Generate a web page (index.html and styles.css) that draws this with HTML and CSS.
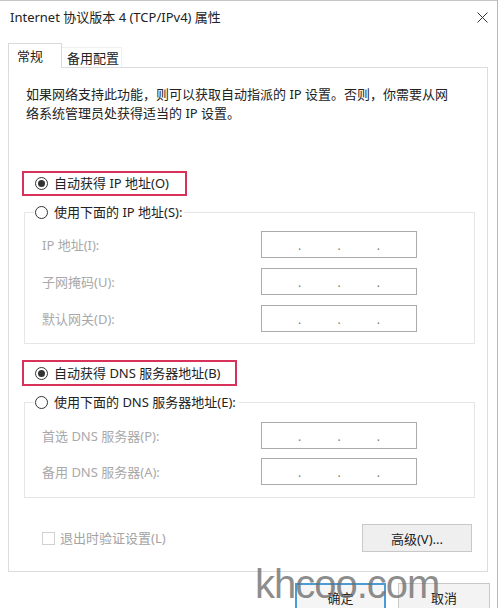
FILE: index.html
```html
<!DOCTYPE html>
<html lang="zh-CN">
<head>
<meta charset="utf-8">
<title>Internet 协议版本 4 (TCP/IPv4) 属性</title>
<link rel="stylesheet" href="styles.css">
</head>
<body>
<div class="window">
  <div class="titlebar">
    <span class="title">Internet 协议版本 4 (TCP/IPv4) 属性</span>
    <svg class="close" width="11" height="11" viewBox="0 0 11 11"><path d="M0.5 0.5 L10.5 10.5 M10.5 0.5 L0.5 10.5" stroke="#333" stroke-width="1" fill="none"/></svg>
  </div>
  <div class="tabs">
    <div class="tab active">常规</div>
    <div class="tab">备用配置</div>
  </div>
  <div class="panel">
    <p class="intro">如果网络支持此功能，则可以获取自动指派的 IP 设置。否则，你需要从网<br>络系统管理员处获得适当的 IP 设置。</p>

    <div class="highlight hl-ip">
      <span class="radio checked"></span><span class="rlabel">自动获得 IP 地址(O)</span>
    </div>

    <fieldset class="group">
      <legend class="legend"><span class="radio"></span><span class="rlabel">使用下面的 IP 地址(S):</span></legend>
      <div class="row"><span class="flabel">IP 地址(I):</span><span class="ipbox"><i>.</i><i>.</i><i>.</i></span></div>
      <div class="row"><span class="flabel">子网掩码(U):</span><span class="ipbox"><i>.</i><i>.</i><i>.</i></span></div>
      <div class="row"><span class="flabel">默认网关(D):</span><span class="ipbox"><i>.</i><i>.</i><i>.</i></span></div>
    </fieldset>

    <div class="highlight hl-dns">
      <span class="radio checked"></span><span class="rlabel">自动获得 DNS 服务器地址(B)</span>
    </div>

    <fieldset class="group group-dns">
      <legend class="legend"><span class="radio"></span><span class="rlabel">使用下面的 DNS 服务器地址(E):</span></legend>
      <div class="row"><span class="flabel">首选 DNS 服务器(P):</span><span class="ipbox"><i>.</i><i>.</i><i>.</i></span></div>
      <div class="row"><span class="flabel">备用 DNS 服务器(A):</span><span class="ipbox"><i>.</i><i>.</i><i>.</i></span></div>
    </fieldset>

    <div class="footer-row">
      <label class="check"><span class="checkbox"></span><span class="clabel">退出时验证设置(L)</span></label>
      <button class="btn adv">高级(V)...</button>
    </div>
  </div>
  <div class="actions">
    <button class="btn ok">确定</button>
    <button class="btn cancel">取消</button>
  </div>
  <div class="watermark">khcoo.com</div>
</div>
</body>
</html>
```

FILE: styles.css
```css
* { box-sizing: border-box; }
html, body { margin: 0; padding: 0; background: #fff; }
body {
  font-family: "Noto Sans", "Noto Sans CJK SC", sans-serif;
  font-size: 13px;
  color: #222;
  width: 500px;
  height: 608px;
  overflow: hidden;
}
.window {
  position: relative;
  width: 498px;
  height: 608px;
  border-top: 1px solid #c4c4c4;
  border-right: 1px solid #b8b8b8;
  background: #fff;
  overflow: hidden;
}
.titlebar {
  height: 33px;
  display: flex;
  align-items: center;
  justify-content: space-between;
  padding: 0 9px 0 10px;
}
.title { line-height: 19px; color: #222; }
.close { display: block; }

.tabs {
  display: flex;
  margin: 9px 0 0 8px;
  height: 24px;
  align-items: flex-end;
}
.tab {
  line-height: 19px;
}
.tab.active {
  width: 54px;
  height: 25px;
  padding: 3px 0 0 8px;
  border: 1px solid #dadada;
  border-bottom: none;
  background: #fff;
  position: relative;
  z-index: 1;
  margin-bottom: -1px;
}
.tab:not(.active) {
  width: 60px;
  height: 20px;
  padding: 1px 0 0 5px;
  border-top: 1px solid #efefef;
  border-right: 1px solid #efefef;
}

.panel {
  margin: 0 9px 0 8px;
  height: 505px;
  border: 1px solid #dcdcdc;
  display: flex;
  flex-direction: column;
}
.intro {
  margin: 17px 0 0 17px;
  line-height: 19px;
}

.highlight {
  margin-left: 13px;
  height: 25px;
  border: 2px solid #d8325a;
  display: flex;
  align-items: center;
  padding-left: 11px;
}
.hl-ip { margin-top: 48px; width: 165px; }
.hl-dns { margin-top: 16px; width: 215px; height: 26px; }

.radio {
  width: 13px;
  height: 13px;
  border: 1px solid #333;
  border-radius: 50%;
  display: inline-flex;
  align-items: center;
  justify-content: center;
  flex: none;
  background: #fff;
}
.radio.checked::after {
  content: "";
  width: 7px;
  height: 7px;
  border-radius: 50%;
  background: #333;
}
.rlabel { margin-left: 6px; line-height: 19px; white-space: nowrap; }

.group {
  margin: 7px 12px 0 15px;
  padding: 9px 0 11px 9px;
  border: 1px solid #e6e6e6;
  min-width: 0;
}
.group-dns { padding: 10px 0 12px 9px; }
.legend {
  padding: 0 2px 0 1px;
  display: flex;
  align-items: center;
  line-height: 19px;
  background: #fff;
}
.row {
  display: grid;
  grid-template-columns: 227px 156px;
  align-items: center;
  height: 27px;
}
.row + .row { margin-top: 10px; }
.group-dns .row + .row { margin-top: 9px; }
.flabel {
  padding-left: 8px;
  color: #a9a9a9;
  white-space: nowrap;
}
.ipbox {
  height: 27px;
  border: 1px solid #ababab;
  display: flex;
  justify-content: space-evenly;
  align-items: center;
  padding-top: 3px;
}
.ipbox i {
  font-style: normal;
  color: #7d7d7d;
  font-size: 12px;
  line-height: 12px;
}

.footer-row {
  margin: 26px 15px 0 33px;
  display: flex;
  align-items: center;
  justify-content: space-between;
}
.check { display: flex; align-items: center; }
.checkbox {
  width: 13px;
  height: 13px;
  border: 1px solid #d0d0d0;
  background: #fff;
}
.clabel { margin-left: 5px; color: #a3a3a3; line-height: 19px; }

.btn {
  font-family: inherit;
  font-size: 13px;
  color: #222;
  padding: 0;
  height: 28px;
  background: #efefef;
  border: 1px solid #c8c8c8;
}
.adv { width: 110px; }

.actions {
  margin-top: 11px;
  display: flex;
  justify-content: flex-end;
  gap: 12px;
  padding-right: 7px;
}
.ok {
  width: 91px;
  border: 2px solid #4b9bd6;
  background: #f5f5f5;
}
.cancel {
  width: 92px;
  background: #f3f3f3;
}

.watermark {
  position: absolute;
  left: 255px;
  top: 563px;
  font-family: "Liberation Sans", sans-serif;
  font-size: 40px;
  line-height: 40px;
  letter-spacing: -1px;
  color: rgba(110, 110, 110, 0.78);
  pointer-events: none;
  z-index: 5;
}
```
